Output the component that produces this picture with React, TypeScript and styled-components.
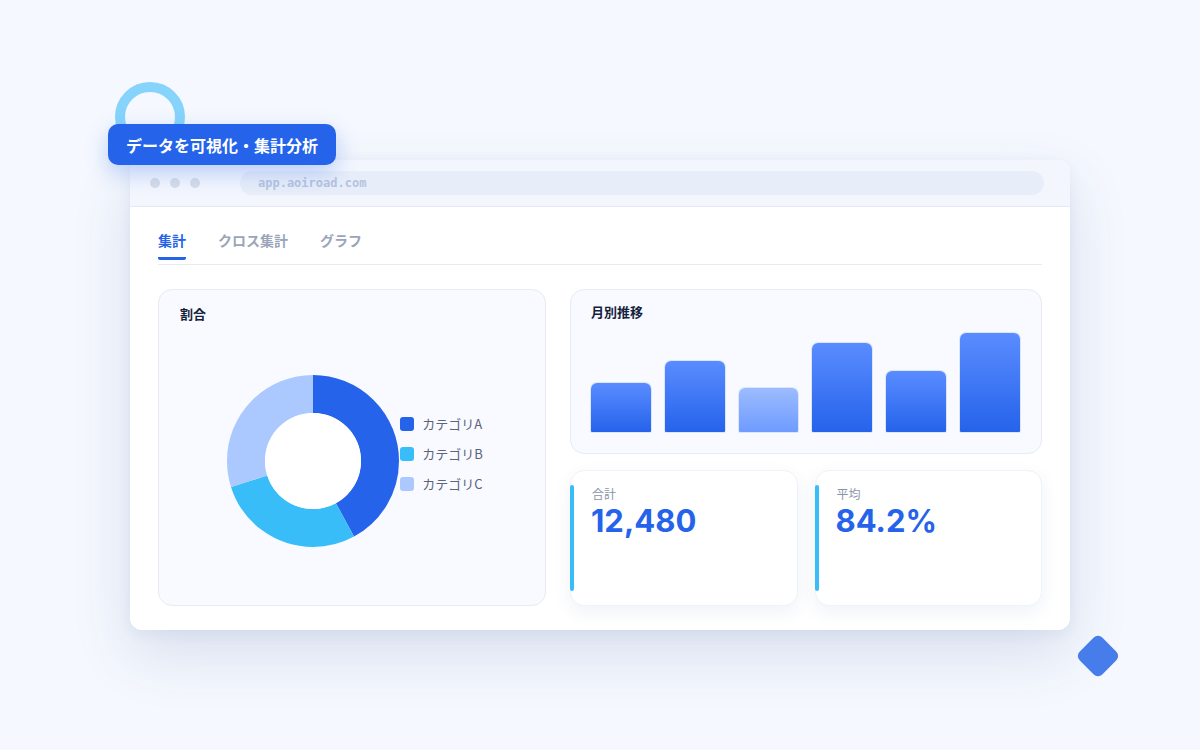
import styled, { createGlobalStyle } from "styled-components";

const GlobalStyle = createGlobalStyle`
  html, body {
    margin: 0;
    padding: 0;
    background: #f5f8fe;
  }
  body {
    font-family: "Noto Sans CJK JP", "Noto Sans", sans-serif;
  }
`;

const bars = [
  { h: 49, light: false },
  { h: 71, light: false },
  { h: 44, light: true },
  { h: 89, light: false },
  { h: 61, light: false },
  { h: 99, light: false },
];

const slices = [
  { name: "カテゴリA", color: "#2563eb", value: 0.42 },
  { name: "カテゴリB", color: "#38bdf8", value: 0.28 },
  { name: "カテゴリC", color: "#abc9fe", value: 0.3 },
];

const Donut = () => {
  const r = 67;
  const c = 2 * Math.PI * r;
  let offset = 0;
  return (
    <svg width="172" height="172" viewBox="0 0 172 172">
      <g transform="rotate(-90 86 86)">
        {slices.map((s) => {
          const len = s.value * c;
          const el = (
            <circle
              key={s.name}
              cx="86"
              cy="86"
              r={r}
              fill="none"
              stroke={s.color}
              strokeWidth="38"
              strokeDasharray={`${len} ${c - len}`}
              strokeDashoffset={-offset}
            />
          );
          offset += len;
          return el;
        })}
      </g>
      <circle cx="86" cy="86" r="48" fill="#ffffff" />
    </svg>
  );
};

export default function App() {
  return (
    <>
      <GlobalStyle />
      <Page>
        <Ring />
        <Badge>データを可視化・集計分析</Badge>
        <Diamond />
        <Window>
          <TitleBar>
            <Dots>
              <Dot />
              <Dot />
              <Dot />
            </Dots>
            <Url>app.aoiroad.com</Url>
          </TitleBar>
          <Body>
            <Tabs>
              <Tab active>集計</Tab>
              <Tab>クロス集計</Tab>
              <Tab>グラフ</Tab>
            </Tabs>
            <Grid>
              <Panel>
                <PanelTitle>割合</PanelTitle>
                <DonutArea>
                  <Donut />
                  <Legend>
                    {slices.map((s) => (
                      <LegendRow key={s.name}>
                        <Swatch color={s.color} />
                        {s.name}
                      </LegendRow>
                    ))}
                  </Legend>
                </DonutArea>
              </Panel>
              <RightCol>
                <BarPanel>
                  <PanelTitle>月別推移</PanelTitle>
                  <Bars>
                    {bars.map((b, i) => (
                      <Bar key={i} light={b.light} style={{ height: b.h }} />
                    ))}
                  </Bars>
                </BarPanel>
                <Stats>
                  <StatCard>
                    <StatLabel>合計</StatLabel>
                    <StatValue>12,480</StatValue>
                  </StatCard>
                  <StatCard>
                    <StatLabel>平均</StatLabel>
                    <StatValue>84.2%</StatValue>
                  </StatCard>
                </Stats>
              </RightCol>
            </Grid>
          </Body>
        </Window>
      </Page>
    </>
  );
}

const Page = styled.div`
  position: relative;
  width: 1200px;
  height: 750px;
  box-sizing: border-box;
  padding-top: 160px;
  display: flex;
  justify-content: center;
  align-items: flex-start;
  overflow: hidden;
  background: #f5f8fe;
`;

const Ring = styled.div`
  position: absolute;
  left: 115px;
  top: 82px;
  width: 50px;
  height: 50px;
  border: 10px solid #86d4fb;
  border-radius: 50%;
  z-index: 2;
`;

const Badge = styled.div`
  position: absolute;
  left: 108px;
  top: 124px;
  height: 41px;
  padding: 0 18px;
  display: flex;
  align-items: center;
  background: #2563eb;
  color: #ffffff;
  border-radius: 10px;
  font-size: 16px;
  font-weight: 700;
  box-shadow: 0 8px 22px rgba(37, 99, 235, 0.28);
  z-index: 3;
`;

const Diamond = styled.div`
  position: absolute;
  left: 1082px;
  top: 640px;
  width: 32px;
  height: 32px;
  background: #477ceb;
  border-radius: 6px;
  transform: rotate(45deg);
`;

const Window = styled.div`
  width: 940px;
  height: 470px;
  background: #ffffff;
  border-radius: 12px;
  overflow: hidden;
  display: flex;
  flex-direction: column;
  box-shadow: 0 24px 60px rgba(40, 70, 140, 0.14), 0 4px 14px rgba(40, 70, 140, 0.06);
`;

const TitleBar = styled.div`
  height: 47px;
  flex-shrink: 0;
  box-sizing: border-box;
  display: flex;
  align-items: center;
  padding: 0 26px 0 20px;
  background: #f3f6fd;
  border-bottom: 1px solid #e3e9f5;
`;

const Dots = styled.div`
  display: flex;
  gap: 10px;
  margin-right: 40px;
`;

const Dot = styled.div`
  width: 10px;
  height: 10px;
  border-radius: 50%;
  background: #d7dde8;
`;

const Url = styled.div`
  flex: 1;
  height: 24px;
  border-radius: 12px;
  background: #e8eef9;
  display: flex;
  align-items: center;
  padding-left: 18px;
  font-family: "DejaVu Sans Mono", "Liberation Mono", monospace;
  font-size: 12px;
  font-weight: 700;
  color: #b6c4de;
`;

const Body = styled.div`
  flex: 1;
  display: flex;
  flex-direction: column;
  padding: 0 28px 24px;
`;

const Tabs = styled.div`
  display: flex;
  gap: 32px;
  height: 57px;
  align-items: flex-end;
  border-bottom: 1px solid #e6ebf3;
`;

const Tab = styled.div<{ active?: boolean }>`
  font-size: 14px;
  font-weight: 700;
  color: ${(p) => (p.active ? "#2563eb" : "#9aa5ba")};
  padding-bottom: 7px;
  border-bottom: 3px solid ${(p) => (p.active ? "#2563eb" : "transparent")};
  border-radius: 0 0 2px 2px;
  line-height: 20px;
  margin-bottom: 4px;
`;

const Grid = styled.div`
  flex: 1;
  margin-top: 24px;
  display: grid;
  grid-template-columns: 388px 1fr;
  gap: 24px;
`;

const Panel = styled.div`
  background: #f8faff;
  border: 1px solid #e6ebf6;
  border-radius: 14px;
  display: flex;
  flex-direction: column;
  padding: 14px 21px 0;
`;

const PanelTitle = styled.div`
  font-size: 13px;
  font-weight: 700;
  color: #14213d;
  line-height: 20px;
`;

const DonutArea = styled.div`
  flex: 1;
  display: flex;
  align-items: center;
  justify-content: center;
  padding-left: 6px;
  padding-bottom: 8px;
`;

const Legend = styled.div`
  display: flex;
  flex-direction: column;
  gap: 10px;
  margin-left: 1px;
  margin-bottom: 14px;
`;

const LegendRow = styled.div`
  display: flex;
  align-items: center;
  gap: 8px;
  font-size: 13px;
  color: #5b6478;
  line-height: 20px;
`;

const Swatch = styled.span<{ color: string }>`
  width: 14px;
  height: 14px;
  border-radius: 3px;
  background: ${(p) => p.color};
`;

const RightCol = styled.div`
  display: flex;
  flex-direction: column;
  gap: 16px;
`;

const BarPanel = styled(Panel)`
  height: 165px;
  box-sizing: border-box;
  padding: 12px 21px 21px 20px;
  flex-shrink: 0;
`;

const Bars = styled.div`
  flex: 1;
  display: flex;
  align-items: flex-end;
  gap: 14px;
`;

const Bar = styled.div<{ light?: boolean }>`
  flex: 1;
  border-radius: 6px 6px 1px 1px;
  background: ${(p) =>
    p.light
      ? "linear-gradient(180deg, #9dbcff 0%, #6d9bff 100%)"
      : "linear-gradient(180deg, #5a8cff 0%, #2563eb 100%)"};
  box-shadow: 0 0 0 1px rgba(210, 225, 255, 0.8);
`;

const Stats = styled.div`
  flex: 1;
  display: grid;
  grid-template-columns: 1fr 1fr;
  gap: 17px;
`;

const StatCard = styled.div`
  position: relative;
  background: #ffffff;
  border: 1px solid #eef2fa;
  border-radius: 14px;
  padding: 14px 21px;
  box-shadow: 0 6px 18px rgba(40, 70, 140, 0.07);
  &:before {
    content: "";
    position: absolute;
    left: -1px;
    top: 14px;
    bottom: 14px;
    width: 4px;
    border-radius: 2px;
    background: #38bdf8;
  }
`;

const StatLabel = styled.div`
  font-size: 12px;
  color: #8a94a8;
  line-height: 18px;
`;

const StatValue = styled.div`
  font-family: Inter, "Noto Sans", sans-serif;
  font-size: 31px;
  font-weight: 700;
  color: #2563eb;
  line-height: 36px;
  letter-spacing: 0;
  margin-left: -1px;
`;
